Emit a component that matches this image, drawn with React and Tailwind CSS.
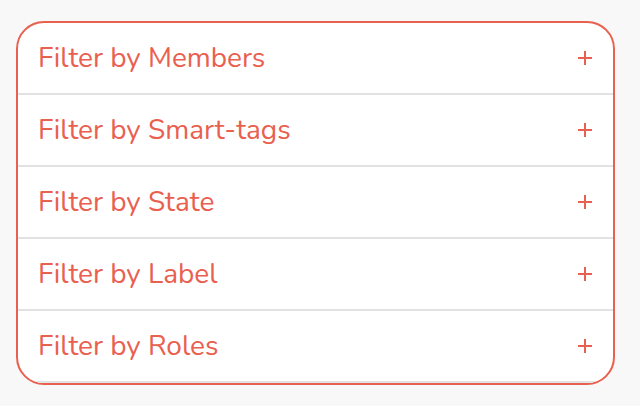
const filters = ['Members', 'Smart-tags', 'State', 'Label', 'Roles'];

function PlusIcon() {
  return (
    <svg width="14" height="14" viewBox="0 0 14 14" className="shrink-0">
      <path d="M7 0v14M0 7h14" stroke="#e9604f" strokeWidth="2" />
    </svg>
  );
}

export default function App() {
  return (
    <div className="min-h-screen bg-[#f8f8f8] pt-[21px] pl-4" style={{ fontFamily: 'Nunito, "Open Sans", sans-serif' }}>
      <div className="w-[599px] overflow-hidden rounded-[28px] border-2 border-[#e9604f] bg-white">
        {filters.map((name) => (
          <div
            key={name}
            className="flex h-[72px] items-center justify-between border-b-2 border-[#e2e2e2] pl-[20px] pr-[21px]"
          >
            <span className="text-[28px] text-[#e9604f]">Filter by {name}</span>
            <PlusIcon />
          </div>
        ))}
      </div>
    </div>
  );
}
